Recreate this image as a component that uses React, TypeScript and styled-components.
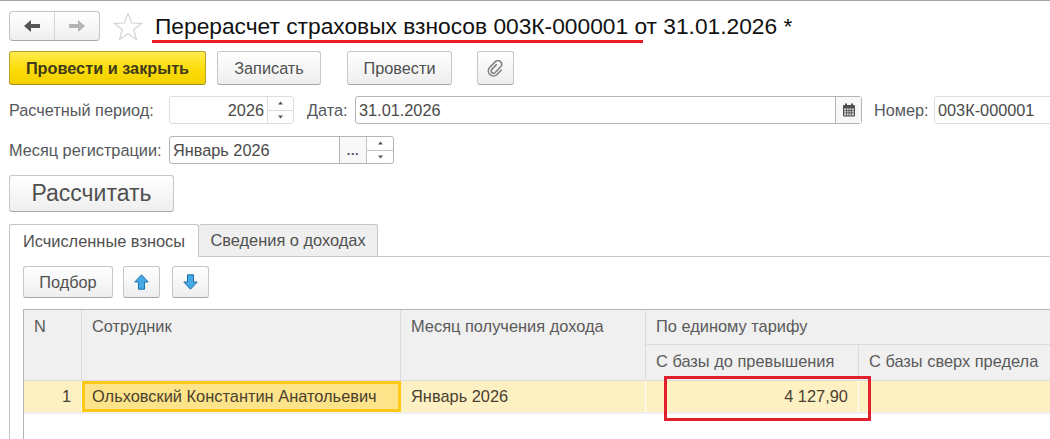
import React from "react";
import styled, { createGlobalStyle } from "styled-components";

const GlobalStyle = createGlobalStyle`
    html, body {
        margin: 0;
        padding: 0;
        background: #ffffff;
        overflow: hidden;
    }
`;

const Page = styled.div`
    position: relative;
    width: 1050px;
    height: 439px;
    overflow: hidden;
    box-sizing: border-box;
    border-top: 1px solid #a3a3a3;
    padding: 10px 0 0 9px;
    font-family: "Liberation Sans", Arial, sans-serif;
    color: #4a4a4a;
    background: #ffffff;
`;

const TitleRow = styled.div`
    display: flex;
    align-items: center;
    height: 30px;
`;

const NavGroup = styled.div`
    display: flex;
    width: 91px;
    height: 30px;
    box-sizing: border-box;
    border: 1px solid #c4c4c4;
    border-bottom-color: #a8a8a8;
    border-radius: 4px;
    background: linear-gradient(#ffffff, #efefef);
`;

const NavCell = styled.div<{ divider?: boolean }>`
    flex: 1;
    display: flex;
    align-items: center;
    justify-content: center;
    border-right: ${(props) => (props.divider ? "1px solid #d4d4d4" : "none")};
`;

const StarBox = styled.div`
    display: flex;
    margin: 0 12px 0 13px;
`;

const Title = styled.h1`
    margin: 0;
    font-size: 22.75px;
    font-weight: 400;
    color: #111111;
    white-space: nowrap;
    line-height: 30px;
`;

const ToolbarRow = styled.div`
    display: flex;
    align-items: center;
    height: 34px;
    margin-top: 10px;
`;

const Button = styled.div<{ w: number; h?: number; ml?: number; fs?: number; primary?: boolean }>`
    display: flex;
    align-items: center;
    justify-content: center;
    flex: none;
    box-sizing: border-box;
    width: ${(props) => props.w}px;
    height: ${(props) => props.h ?? 34}px;
    margin-left: ${(props) => props.ml ?? 0}px;
    font-size: ${(props) => props.fs ?? 16.3}px;
    font-weight: ${(props) => (props.primary ? 700 : 400)};
    color: ${(props) => (props.primary ? "#40391a" : "#505050")};
    border: 1px solid ${(props) => (props.primary ? "#b9a227" : "#c6c6c6")};
    border-bottom-color: ${(props) => (props.primary ? "#a08c1c" : "#a6a6a6")};
    border-radius: 3px;
    background: ${(props) =>
        props.primary
            ? "linear-gradient(#ffec4f, #fbdc06 55%, #f2d000)"
            : "linear-gradient(#ffffff, #eeeeee)"};
`;

const FormRow = styled.div<{ mt: number }>`
    display: flex;
    align-items: center;
    height: 28px;
    margin-top: ${(props) => props.mt}px;
    font-size: 16.3px;
`;

const Label = styled.span<{ w: number; ml?: number }>`
    flex: none;
    width: ${(props) => props.w}px;
    margin-left: ${(props) => props.ml ?? 0}px;
    padding-top: 1px;
    color: #55585c;
    white-space: nowrap;
`;

const Field = styled.div<{ w: number; soft?: boolean }>`
    display: flex;
    flex: none;
    box-sizing: border-box;
    width: ${(props) => props.w}px;
    height: 28px;
    background: #ffffff;
    border: 1px solid ${(props) => (props.soft ? "#dddddd" : "#b5b5b5")};
    border-radius: 3px;
`;

const FieldText = styled.div<{ right?: boolean }>`
    flex: 1;
    display: flex;
    align-items: center;
    justify-content: ${(props) => (props.right ? "flex-end" : "flex-start")};
    padding: 1px 3px 0;
    color: #4a4a4a;
    white-space: nowrap;
`;

const Spin = styled.div<{ w: number; soft?: boolean }>`
    flex: none;
    display: flex;
    flex-direction: column;
    width: ${(props) => props.w}px;
    border-left: 1px solid ${(props) => (props.soft ? "#dddddd" : "#c4c4c4")};
`;

const SpinPart = styled.div<{ first?: boolean; soft?: boolean }>`
    flex: 1;
    display: flex;
    align-items: center;
    justify-content: center;
    border-bottom: ${(props) =>
        props.first ? `1px solid ${props.soft ? "#dddddd" : "#c4c4c4"}` : "none"};
`;

const FieldAction = styled.div<{ w: number }>`
    flex: none;
    display: flex;
    align-items: center;
    justify-content: center;
    width: ${(props) => props.w}px;
    border-left: 1px solid #b5b5b5;
    background: #f8f8f8;
    font-weight: 700;
    color: #555555;
`;

const Dots = styled.span`
    font-size: 13px;
    line-height: 13px;
    letter-spacing: 0.5px;
`;

const CalcRow = styled.div`
    margin-top: 11px;
`;

const Tabs = styled.div`
    display: flex;
    height: 33px;
    margin-top: 12px;
    box-sizing: border-box;
    font-size: 16.4px;
`;

const TabFiller = styled.div`
    flex: 1;
    border-bottom: 1px solid #c8c8c8;
`;

const Tab = styled.div<{ w: number; active?: boolean }>`
    display: flex;
    align-items: center;
    justify-content: center;
    flex: none;
    box-sizing: border-box;
    width: ${(props) => props.w}px;
    color: #505050;
    background: ${(props) => (props.active ? "#ffffff" : "#efefef")};
    border: 1px solid #c4c4c4;
    border-bottom: ${(props) => (props.active ? "none" : "1px solid #c8c8c8")};
    border-left-width: ${(props) => (props.active ? "1px" : "0")};
    border-radius: 3px 3px 0 0;
`;

const Panel = styled.div`
    box-sizing: border-box;
    height: 183px;
    padding: 9px 0 0 13px;
    border-left: 1px solid #c4c4c4;
`;

const PickRow = styled.div`
    display: flex;
    align-items: center;
    height: 32px;
`;

const TableGrid = styled.div`
    display: grid;
    grid-template-columns: 58px 319px 245px 213px 200px;
    grid-template-rows: 35px 36px 31px 1fr;
    width: 1027px;
    height: 131px;
    margin-top: 11px;
    box-sizing: border-box;
    border-top: 1px solid #b4b4b4;
    border-left: 1px solid #b4b4b4;
    font-size: 16.4px;
`;

const HeadCell = styled.div<{ col: string; row: string }>`
    grid-column: ${(props) => props.col};
    grid-row: ${(props) => props.row};
    box-sizing: border-box;
    padding: 7px 10px 0;
    background: #f0f0f0;
    color: #5a5a5a;
    white-space: nowrap;
    border-right: 1px solid #dcdcdc;
    border-bottom: 1px solid #dcdcdc;
`;

const DataCell = styled.div<{ right?: boolean; current?: boolean }>`
    display: flex;
    align-items: center;
    box-sizing: border-box;
    justify-content: ${(props) => (props.right ? "flex-end" : "flex-start")};
    padding: 0 10px;
    white-space: nowrap;
    color: #4a4030;
    background: ${(props) => (props.current ? "#fde389" : "#fdf1c4")};
    border: ${(props) => (props.current ? "3px solid #fdc818" : "none")};
    border-right: ${(props) => (props.current ? "3px solid #fdc818" : "1px solid #ffffff")};
    padding-left: ${(props) => (props.current ? "7px" : "10px")};
`;

const RowEdge = styled.div`
    grid-column: 1 / -1;
    grid-row: 4;
    height: 2px;
    background: #eeeeee;
`;

const TitleUnderline = styled.div`
    position: absolute;
    left: 152px;
    top: 39px;
    width: 491px;
    height: 3px;
    background: #ed1c24;
`;

const ValueFrame = styled.div`
    position: absolute;
    left: 664px;
    top: 375px;
    width: 207px;
    height: 45px;
    box-sizing: border-box;
    border: 3px solid #e0202c;
`;

const ArrowIcon = ({ dir, color }: { dir: "left" | "right"; color: string }) => (
    <svg width="18" height="14" viewBox="0 0 18 14" style={{ transform: dir === "right" ? "scaleX(-1)" : undefined }}>
        <path d="M1 7 L8 1 V5 H17 V9 H8 V13 Z" fill={color} />
    </svg>
);

const StarIcon = () => (
    <svg width="30" height="29" viewBox="0 0 30 29">
        <path
            d="M15 1.5 L18.6 11 L28.6 11.4 L20.8 17.6 L23.4 27.4 L15 21.8 L6.6 27.4 L9.2 17.6 L1.4 11.4 L11.4 11 Z"
            fill="#ffffff"
            stroke="#d2d2d2"
            strokeWidth="1.2"
        />
    </svg>
);

const ClipIcon = () => (
    <svg width="17" height="17" viewBox="0 0 24 24" fill="none" stroke="#808080" strokeWidth="2.2" strokeLinecap="round" strokeLinejoin="round">
        <path d="M13.2 6.5 6.6 13.6a3.2 3.2 0 0 0 4.6 4.4l8-8.4a5.2 5.2 0 0 0-7.4-7.3L3.6 10.7a7.2 7.2 0 0 0 10.2 10.1l6.4-6.6" />
    </svg>
);

const Tick = ({ up }: { up?: boolean }) => (
    <svg width="7" height="4" viewBox="0 0 7 4">
        <path d={up ? "M3.5 0.5 L6 3.5 H1 Z" : "M1 0.5 H6 L3.5 3.5 Z"} fill="#555555" />
    </svg>
);

const CalendarIcon = () => (
    <svg width="14" height="14" viewBox="0 0 14 14">
        <rect x="1" y="2" width="12" height="11.5" rx="1" fill="#4f4f4f" />
        <rect x="3" y="0.5" width="2" height="3" fill="#4f4f4f" />
        <rect x="9" y="0.5" width="2" height="3" fill="#4f4f4f" />
        <rect x="2.2" y="5.5" width="9.6" height="6.8" fill="#e4e4e4" />
        <path d="M2.2 7.6 H11.8 M2.2 9.9 H11.8 M4.6 5.5 V12.3 M7 5.5 V12.3 M9.4 5.5 V12.3" stroke="#4f4f4f" strokeWidth="0.9" />
    </svg>
);

const BlueArrow = ({ down }: { down?: boolean }) => (
    <svg width="15" height="16" viewBox="0 0 15 16" style={{ transform: down ? "scaleY(-1)" : undefined }}>
        <path d="M7.5 0.8 L14.2 8 H10.5 V15.2 H4.5 V8 H0.8 Z" fill="#45a9e6" stroke="#1d6ea8" strokeWidth="1" strokeLinejoin="round" />
    </svg>
);

const Spinner = ({ w, soft }: { w: number; soft?: boolean }) => (
    <Spin w={w} soft={soft}>
        <SpinPart first soft={soft}>
            <Tick up />
        </SpinPart>
        <SpinPart>
            <Tick />
        </SpinPart>
    </Spin>
);

export default function App() {
    return (
        <Page>
            <GlobalStyle />
            <TitleRow>
                <NavGroup>
                    <NavCell divider>
                        <ArrowIcon dir="left" color="#555555" />
                    </NavCell>
                    <NavCell>
                        <ArrowIcon dir="right" color="#b4b4b4" />
                    </NavCell>
                </NavGroup>
                <StarBox>
                    <StarIcon />
                </StarBox>
                <Title>Перерасчет страховых взносов 003К-000001 от 31.01.2026 *</Title>
            </TitleRow>
            <ToolbarRow>
                <Button w={197} primary>Провести и закрыть</Button>
                <Button w={104} ml={11}>Записать</Button>
                <Button w={105} ml={26}>Провести</Button>
                <Button w={37} ml={25}>
                    <ClipIcon />
                </Button>
            </ToolbarRow>
            <FormRow mt={11}>
                <Label w={160}>Расчетный период:</Label>
                <Field w={125} soft>
                    <FieldText right>2026</FieldText>
                    <Spinner w={25} soft />
                </Field>
                <Label w={48} ml={13}>Дата:</Label>
                <Field w={507}>
                    <FieldText>31.01.2026</FieldText>
                    <FieldAction w={25}>
                        <CalendarIcon />
                    </FieldAction>
                </Field>
                <Label w={60} ml={12}>Номер:</Label>
                <Field w={130} soft>
                    <FieldText>003К-000001</FieldText>
                </Field>
            </FormRow>
            <FormRow mt={12}>
                <Label w={160}>Месяц регистрации:</Label>
                <Field w={225}>
                    <FieldText>Январь 2026</FieldText>
                    <FieldAction w={26}>
                        <Dots>...</Dots>
                    </FieldAction>
                    <Spinner w={26} />
                </Field>
            </FormRow>
            <CalcRow>
                <Button w={165} h={37} fs={23}>Рассчитать</Button>
            </CalcRow>
            <Tabs>
                <Tab w={190} active>Исчисленные взносы</Tab>
                <Tab w={179}>Сведения о доходах</Tab>
                <TabFiller />
            </Tabs>
            <Panel>
                <PickRow>
                    <Button w={90} h={32}>Подбор</Button>
                    <Button w={37} h={32} ml={10}>
                        <BlueArrow />
                    </Button>
                    <Button w={37} h={32} ml={12}>
                        <BlueArrow down />
                    </Button>
                </PickRow>
                <TableGrid>
                    <HeadCell col="1" row="1 / 3">N</HeadCell>
                    <HeadCell col="2" row="1 / 3">Сотрудник</HeadCell>
                    <HeadCell col="3" row="1 / 3">Месяц получения дохода</HeadCell>
                    <HeadCell col="4 / 6" row="1">По единому тарифу</HeadCell>
                    <HeadCell col="4" row="2">С базы до превышения</HeadCell>
                    <HeadCell col="5" row="2">С базы сверх предела</HeadCell>
                    <DataCell right>1</DataCell>
                    <DataCell current>Ольховский Константин Анатольевич</DataCell>
                    <DataCell>Январь 2026</DataCell>
                    <DataCell right>4 127,90</DataCell>
                    <DataCell />
                    <RowEdge />
                </TableGrid>
            </Panel>
            <TitleUnderline />
            <ValueFrame />
        </Page>
    );
}
